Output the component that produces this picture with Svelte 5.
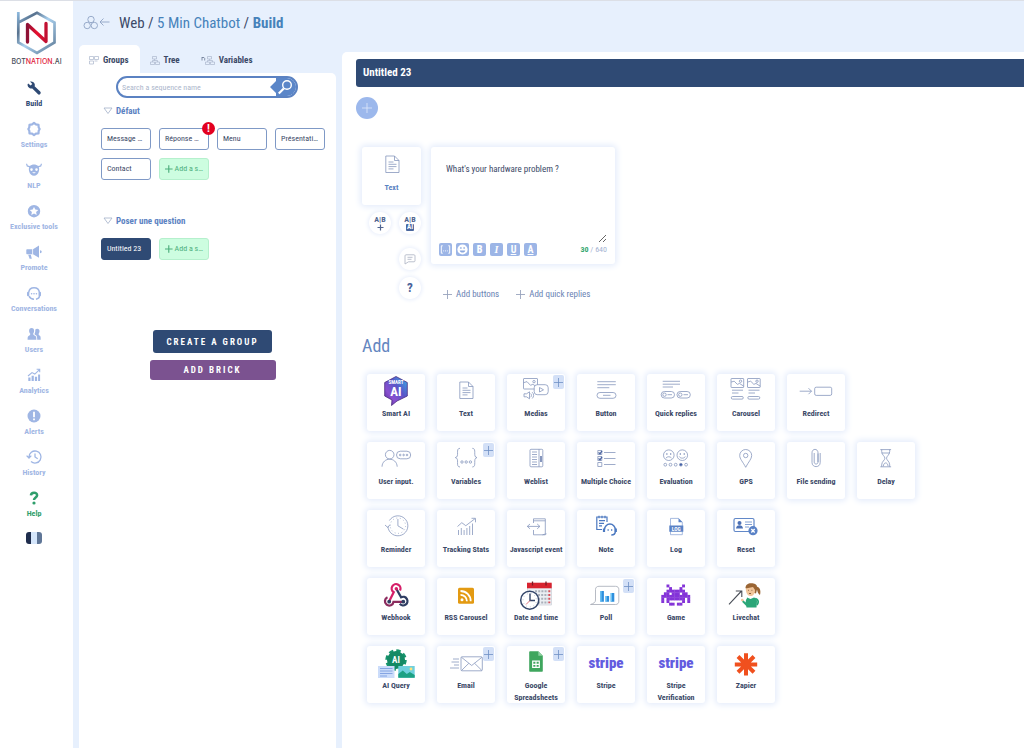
<script>
  const navItems = [
    { id: 'build', label: 'Build' },
    { id: 'settings', label: 'Settings' },
    { id: 'nlp', label: 'NLP' },
    { id: 'tools', label: 'Exclusive tools' },
    { id: 'promote', label: 'Promote' },
    { id: 'conversations', label: 'Conversations' },
    { id: 'users', label: 'Users' },
    { id: 'analytics', label: 'Analytics' },
    { id: 'alerts', label: 'Alerts' },
    { id: 'history', label: 'History' },
    { id: 'help', label: 'Help' }
  ];

  const tabs = ['Groups', 'Tree', 'Variables'];

  // names come already shortened to the chip width
  const groups = [
    {
      name: 'Défaut',
      sequences: [
        { name: 'Message …' },
        { name: 'Réponse …', alert: true },
        { name: 'Menu' },
        { name: 'Présentati…' },
        { name: 'Contact' }
      ]
    },
    { name: 'Poser une question', sequences: [{ name: 'Untitled 23' }] }
  ];

  const brickRows = [
    [
      { icon: 'smart', label: 'Smart AI' },
      { icon: 'text', label: 'Text' },
      { icon: 'medias', label: 'Medias', more: true },
      { icon: 'button', label: 'Button' },
      { icon: 'quick', label: 'Quick replies' },
      { icon: 'carousel', label: 'Carousel' },
      { icon: 'redirect', label: 'Redirect' }
    ],
    [
      { icon: 'input', label: 'User input.' },
      { icon: 'variables', label: 'Variables', more: true },
      { icon: 'weblist', label: 'Weblist' },
      { icon: 'choice', label: 'Multiple Choice' },
      { icon: 'evaluation', label: 'Evaluation' },
      { icon: 'gps', label: 'GPS' },
      { icon: 'file', label: 'File sending' },
      { icon: 'delay', label: 'Delay' }
    ],
    [
      { icon: 'reminder', label: 'Reminder' },
      { icon: 'tracking', label: 'Tracking Stats' },
      { icon: 'javascript', label: 'Javascript event' },
      { icon: 'note', label: 'Note' },
      { icon: 'log', label: 'Log' },
      { icon: 'reset', label: 'Reset' }
    ],
    [
      { icon: 'webhook', label: 'Webhook' },
      { icon: 'rss', label: 'RSS Carousel' },
      { icon: 'date', label: 'Date and time' },
      { icon: 'poll', label: 'Poll', more: true },
      { icon: 'game', label: 'Game' },
      { icon: 'livechat', label: 'Livechat' }
    ],
    [
      { icon: 'aiquery', label: 'AI Query' },
      { icon: 'email', label: 'Email', more: true },
      { icon: 'sheets', label: 'Google Spreadsheets', more: true },
      { icon: 'stripe', label: 'Stripe' },
      { icon: 'stripe', label: 'Stripe Verification' },
      { icon: 'zapier', label: 'Zapier' }
    ]
  ];

  const invader = [
    '..#.....#..',
    '...#...#...',
    '..#######..',
    '.##.###.##.',
    '###########',
    '#.#######.#',
    '#.#.....#.#',
    '...##.##...'
  ];

  let activeNav = $state('build');
  let activeTab = $state('Groups');
  let selected = $state('Untitled 23');
  let search = $state('');
  let message = $state("What's your hardware problem ?");
</script>

{#snippet navIcon(id)}
  <svg width="20" height="20" viewBox="0 0 20 20" fill="currentColor" aria-hidden="true">
    {#if id === 'build'}
      <path d="M4.2 5.4 6.6 7.600 8.300 6 6 3.600C8 3 10.500 4.200 10.800 6.500c.1.700 0 1.200-.2 1.700l5.600 5.400a1.700 1.700 0 0 1-2.400 2.500L8.300 10.400C6 11.200 3.300 9 3.600 6.200z" />
    {:else if id === 'settings'}
      <path fill="none" stroke="currentColor" stroke-width="2.200" stroke-linejoin="round" d="M10 3.900l1.900 1.500 2.600.5.200 2.600 1 1.500-1 1.700-.2 2.600-2.600.4-1.900 1.500-1.900-1.500-2.600-.4-.2-2.600-1-1.700 1-1.500.2-2.600 2.600-.5z" />
    {:else if id === 'nlp'}
      <path fill-rule="evenodd" d="M10 4.500c1.700 0 3 .5 4 1.500l2.200-.5.8-2 1 .4-.8 2.500-2.400.9c.5 1.200.5 2.800 0 4.200-.5 2.500-2.500 4.300-4.800 4.300s-4.300-1.800-4.800-4.300c-.5-1.400-.5-3 0-4.200l-2.400-.9L2 3.900l1-.4.8 2L6 6c1-1 2.300-1.500 4-1.500zM7.500 8.300a1.300 1.300 0 1 0 0 2.600 1.300 1.300 0 0 0 0-2.600zm5 0a1.300 1.300 0 1 0 0 2.600 1.300 1.300 0 0 0 0-2.600zM8 12.300l2 1.300 2-1.300z" />
    {:else if id === 'tools'}
      <path fill-rule="evenodd" d="M10 4a6.200 6.200 0 1 0 0 12.400A6.200 6.200 0 0 0 10 4zm0 1.900 1.300 2.700 3 .4-2.200 2 .6 3-2.700-1.500L7.300 14l.6-3-2.200-2 3-.4z" />
    {:else if id === 'promote'}
      <path d="M2.300 8.200c0-.6.4-1 1-1H9L15 3.500v12.300l-6-3.600H3.300c-.6 0-1-.4-1-1zM4.200 12.800h2.600l1 4H5.600zM16 8.200c2.300 0 2.300 3 0 3z" />
      <path stroke="#fff" stroke-width=".8" d="M8.600 7v5.400" />
    {:else if id === 'conversations'}
      <path fill="none" stroke="currentColor" stroke-width="1.500" d="M4.700 9.500a5.400 5.400 0 0 1 10.700 0M5 13.200c1 2 2.700 3 5 3M15.500 9v3.500c0 2-1.500 3.300-3.500 3.700" />
      <rect x="3" y="8.800" width="2.300" height="4.500" rx="1" />
      <rect x="14.700" y="8.800" width="2.300" height="4.500" rx="1" />
      <circle cx="7.600" cy="10.800" r=".8" /><circle cx="10" cy="10.800" r=".8" /><circle cx="12.400" cy="10.800" r=".8" />
    {:else if id === 'users'}
      <path d="M7.600 4c1.700 0 2.600 1.200 2.500 2.800 0 1.300-.5 2.300-1 3 .2 1.300 1 1.600 2.300 2.200.8.500 1 1.600 1 3.800H3.600c0-2.300 0-3.300 1-3.800 1.300-.6 1.700-.9 1.700-2.200-.7-.7-1.200-1.700-1.200-3C5 5.200 6 4 7.600 4z" />
      <path d="M11.200 5.800c.5-.7 1.200-1 2-1 1.600 0 2.400 1.100 2.300 2.500 0 1.200-.5 2-.9 2.600.1 1 .5 1.400 1.300 1.800.7.400.8 1.600.8 4.100h-3.500c0-2.800-.3-4-1.300-4.600-.9-.4-1.200-.7-1.400-1.200.6-1 1-2.800.7-4.200z" />
    {:else if id === 'analytics'}
      <path d="M4.300 12.500h2.200V16H4.300zM7.600 10.800h2.200V16H7.600zM10.900 11.800h2.200V16h-2.200zM14.100 9.500h2V16h-2z" />
      <path fill="none" stroke="currentColor" stroke-width="1.100" d="M4 11l4-3.400 2.800 1.500 4.500-4.300M12.600 4.200h3.100v3" />
    {:else if id === 'alerts'}
      <circle cx="10" cy="10" r="6.500" />
      <path fill="none" stroke="#fff" stroke-width="1.800" d="M10 5.800v5.400M10 12.400v1.800" />
    {:else if id === 'history'}
      <path fill="none" stroke="currentColor" stroke-width="1.300" d="M5 10a6 6 0 1 1 2 4.500M2.600 8.600 5 11l2.300-2.400M11 6.600V10l2.700 1.700" />
    {:else}
      <path fill="none" stroke="currentColor" stroke-width="2.500" d="M6.900 7.300c.3-3.600 6.400-3.500 6.200.1-.1 2-3.100 2.200-3.100 4.600" />
      <circle cx="10" cy="15" r="1.600" />
    {/if}
  </svg>
{/snippet}

{#snippet landscape(x, y, w, h)}
  <rect {x} {y} width={w} height={h} rx=".5" />
  <path d="M{x} {y + h * 0.4}l{w * 0.25} {h * -0.1} {w * 0.25} {h * 0.35} {w * 0.17} {h * -0.1} {w * 0.33} {h * 0.3}" />
  <circle cx={x + w * 0.75} cy={y + h * 0.3} r="1.200" />
{/snippet}

{#snippet brickIcon(id)}
  <svg class="brick-icon" width="48" height="32" viewBox="0 0 48 32" fill="none" stroke="currentColor" stroke-width=".8" aria-hidden="true">
    {#if id === 'smart'}
      <defs>
        <linearGradient id="smart-fill" x1="0" y1="1" x2="1" y2="0">
          <stop offset="0" stop-color="#4a2a8e" />
          <stop offset=".3" stop-color="#8a4fd0" />
          <stop offset=".6" stop-color="#5a55c8" />
          <stop offset="1" stop-color="#35b4e8" />
        </linearGradient>
      </defs>
      <path fill="url(#smart-fill)" stroke="#4b2a80" d="M24 .5 35.300 6.500v13.500L25 25l-5.500 4.500.5-5.500L12.700 20V6.500z" />
      <text x="24" y="8" class="glyph" font-size="5" text-anchor="middle">SMART</text>
      <text x="24" y="20" class="glyph" font-size="13" text-anchor="middle">AI</text>
    {:else if id === 'text'}
      <path d="M17.800 6h8.700l4.500 4.500V22.500H17.800zM26.500 6v4.500H31M20.500 12h5M20.500 14.300h8M20.500 16.600h8M20.500 18.900h5" />
    {:else if id === 'medias'}
      {@render landscape(11.5, 2.5, 14, 10.5)}
      <rect x="22.200" y="8.700" width="14" height="10" rx="3" fill="#fff" />
      <path d="M27.500 11.500v4.500l4-2.200zM12 17.800h2.500l3-2v7l-3-2H12zM18.700 17.500c1 1 1 2.700 0 3.700M20.200 16.200c1.900 1.700 1.900 4.600 0 6.300" />
    {:else if id === 'button'}
      <path d="M15.300 5.700h18.500M15.300 8.700h18.500M15.300 11.700h12M21 19.300h7.500" />
      <rect x="15" y="16.500" width="19" height="5.800" rx="2.900" />
    {:else if id === 'quick'}
      <path d="M10.700 5.300H28M10.700 8.200H28M10.700 11H21M15.500 18.700h4.500M31.500 18.700h4.500" />
      <rect x="9.200" y="15.500" width="13.300" height="6.500" rx="3.200" />
      <rect x="25" y="15.500" width="13.300" height="6.500" rx="3.200" />
      <circle cx="12.500" cy="18.700" r="1.700" /><circle cx="28.300" cy="18.700" r="1.700" />
    {:else if id === 'carousel'}
      {@render landscape(9, 2.5, 12.7, 9)}
      {@render landscape(25.5, 2.5, 12.7, 9)}
      <path d="M10 14.200h11M10 17h6.500M26.500 14.200h11M26.500 17H33" />
      <rect x="9.300" y="20.500" width="12" height="2.600" rx="1.300" />
      <rect x="25.800" y="20.500" width="12" height="2.600" rx="1.300" />
    {:else if id === 'redirect'}
      <path d="M7.700 15.200H19.500M16.500 12.200l3 3-3 3" />
      <rect x="22.700" y="11.200" width="17" height="8.200" rx="1.500" />
    {:else if id === 'input'}
      <circle cx="17.700" cy="10.700" r="4.300" />
      <path d="M10 22.700c.5-10 14.700-10 15.200 0" />
      <rect x="24.500" y="7.200" width="14.200" height="7.600" rx="3.800" />
      <circle cx="28.200" cy="11" r=".8" /><circle cx="31.600" cy="11" r=".8" /><circle cx="35" cy="11" r=".8" />
    {:else if id === 'variables'}
      <path d="M18 4.300c-5 0 0 8.700-4.700 9.300C18 14.300 13 23 18 23M30.300 4.300c5 0 0 8.700 4.700 9.300-4.700.700.300 9.400-4.700 9.400" />
      <circle cx="20" cy="18" r="1.200" /><circle cx="24.200" cy="18" r="1.200" /><circle cx="28.400" cy="18" r="1.200" />
    {:else if id === 'weblist'}
      <rect x="18" y="5.300" width="12.800" height="17.500" rx="1" />
      <path d="M27 5.300v17.500M20 8h5M20 10.500h5M20 13h5M20 15.500h5M20 18h5M20 20.500h5" />
      <path stroke-width="2" d="M29 12v6" />
    {:else if id === 'choice'}
      <path d="M15.800 6.500h4v4h-4zM15.800 12.500h4v4h-4zM15.800 18.500h4v4h-4zM22 8.500h11.500M22 14.500h11.500M22 20.500h11.500" />
      <path stroke="#4a639f" stroke-width="1.300" d="M16.500 8.500l1.500 1.300 2-3M16.500 14.500l1.500 1.300 2-3" />
    {:else if id === 'evaluation'}
      <circle cx="16.800" cy="11.200" r="5.300" /><circle cx="30.300" cy="11.200" r="5.300" />
      <path d="M14 14c1.500-1.700 4-1.700 5.500 0M27.300 12.500c1 2.200 5 2.200 6 0" />
      <path stroke-width="1.400" d="M14.200 10h1.300M18 10h1.300M27.700 10H29M31.600 10h1.300" />
      <circle cx="13.300" cy="20.700" r="1.400" /><circle cx="18.500" cy="20.700" r="1.400" /><circle cx="23.700" cy="20.700" r="1.400" />
      <circle cx="28.900" cy="20.700" r="1.400" fill="#3f5da8" /><circle cx="34.100" cy="20.700" r="1.400" />
    {:else if id === 'gps'}
      <path d="M23.700 23.300C21 18 17.700 15 17.700 11.500a6 6 0 0 1 12 0c0 3.500-3.300 6.500-6 11.800z" />
      <circle cx="23.700" cy="11.500" r="2.200" />
    {:else if id === 'file'}
      <path d="M26 9.500v8.500c0 2.700-3.800 2.700-3.800 0V9M28.200 9v9.500c0 5.500-8.200 5.500-8.200 0V8.800c0-4.600 6-4.600 6 0V18" />
    {:else if id === 'delay'}
      <path d="M18.300 5.600h10.800M18.300 22.800h10.800M19.700 5.600v2c0 3.300 3.200 4.600 3.200 6.600s-3.200 3.300-3.200 6.600v2M27.700 5.600v2c0 3.300-3.200 4.600-3.200 6.600s3.200 3.300 3.200 6.600v2M19.700 9h8M21.300 22.300c.3-4.500 4.500-4.500 4.800 0" />
    {:else if id === 'reminder'}
      <path d="M15.900 14.500a10 10 0 1 0 1.500-6M13 13l2.800 2.500L18 12.500M25.900 7v6.800l5.600 3.400" />
      <path stroke-dasharray=".8 2.700" d="M18.200 13.700a7.700 7.700 0 1 1 15.400 0 7.700 7.700 0 1 1-15.400 0" />
    {:else if id === 'tracking'}
      <path d="M15.500 14.500l4.300-3.800 4 3 9.200-7M29.500 6.300h4v4M16.500 18v5M19.300 16v7M22.100 18v5M24.900 16v7M27.700 14v9M30.500 11.500V23" />
    {:else if id === 'javascript'}
      <path d="M21.500 11V6.800h11.800v16H21.500V18M21.500 8.800h11.800M15.300 14.400h12.500M18 12l-2.700 2.400L18 16.800M25.200 12l2.700 2.400-2.700 2.400M30.500 22.800l4-1" />
    {:else if id === 'note'}
      <g stroke="#4b78c0">
        <path stroke-width="1.200" d="M25 10V5H14.800v12.500H20M17 3.700v2.500M20 3.700v2.500M23 3.700v2.500M17 8.700h6M17 11.300h5M17 13.900h3" />
        <path stroke-width="1.500" d="M22.500 17.500a5.400 5.400 0 0 1 10.800 0v2c0 2-1.700 3.500-4 3.500" />
        <path stroke-width="2.200" d="M22 16.500v3.500M33.800 16.500v3.500" />
        <path stroke-width="1.300" d="M25.500 18h1.300M29 18h1.300" />
      </g>
    {:else if id === 'log'}
      <path stroke="#91a9d8" d="M18.500 6.400h8l3.800 3.800v12.500H18.500z" />
      <path fill="#5a82c6" stroke="none" d="M26.500 6.200l4 4h-4zM17.300 13.500h14v6.200h-14z" />
      <text x="24.300" y="18.500" class="glyph" font-size="5.500" text-anchor="middle">LOG</text>
    {:else if id === 'reset'}
      <rect x="12" y="6.500" width="20" height="13" rx="1.500" stroke="#6288c8" stroke-width="1.200" />
      <circle cx="17.500" cy="11" r="2" fill="#4b70b5" stroke="none" />
      <path fill="#4b70b5" stroke="none" d="M14 16.500c0-4.500 7-4.500 7 0z" />
      <path stroke="#6288c8" d="M23 10h7M23 12.500h7M23 15h4" />
      <circle cx="31" cy="18.700" r="4.600" fill="#5a82c6" stroke="none" />
      <path stroke="#fff" stroke-width="1.400" d="M29.300 17l3.400 3.400M32.700 17l-3.400 3.400" />
    {:else if id === 'webhook'}
      <path stroke="#d61f69" stroke-width="2.300" d="M28 10.500a4.400 4.400 0 1 0-6.300 1.700l-4.500 9" />
      <path stroke="#2f3e63" stroke-width="2.300" d="M24.300 8.800l4.800 8.500a4.300 4.300 0 1 1-1.300 6.500" />
      <path stroke="#8b2c5e" stroke-width="2.300" d="M15.500 17.300a4.300 4.300 0 1 0 6 4.500h9.500" />
      <circle cx="24.300" cy="8.800" r="1.700" fill="#d61f69" stroke="none" />
      <circle cx="17.200" cy="21.700" r="1.900" fill="#2f3e63" stroke="none" />
      <circle cx="31.300" cy="21.700" r="1.900" fill="#2f3e63" stroke="none" />
    {:else if id === 'rss'}
      <rect x="16" y="7.700" width="16" height="16" rx="1.500" fill="#e39a12" stroke="none" />
      <circle cx="20" cy="19.700" r="1.500" fill="#fff" stroke="none" />
      <path stroke="#fff" stroke-width="1.800" d="M18.500 14.800a6.400 6.400 0 0 1 6.400 6.400M18.500 11a10.200 10.200 0 0 1 10.200 10.200" />
    {:else if id === 'date'}
      <path fill="#eceff3" stroke="#cfd3da" d="M15.500 4h24v21h-24z" />
      <path fill="#d8232f" stroke="none" d="M15 2.700h24.700v5.600H15z" />
      <path stroke="#7b1a22" stroke-width="1.300" d="M20.500 1.500v4M34 1.500v4" />
      <path stroke="#aab0ba" stroke-width="2" stroke-dasharray="2 1.200" d="M23 11.300h13M26 15h10M26 18.700h10M26 22.400h10" />
      <path stroke="#d8505a" stroke-width="2" stroke-dasharray="2 1.700" d="M37.300 10.300v13" />
      <circle cx="17.700" cy="20.200" r="9" fill="#fff" stroke="#34466a" stroke-width="1.500" />
      <path stroke="#34466a" stroke-width="1.400" d="M18 13.500v7h5" />
      <path stroke="#d8505a" d="M18 20.500l-4 4" />
      <path stroke="#9aa5b8" stroke-dasharray=".8 3" d="M11 20.200a6.700 6.700 0 1 1 13.400 0 6.700 6.700 0 1 1-13.400 0" />
    {:else if id === 'poll'}
      <path d="M17 6.300h16.500c2.200 0 3.300 1.200 3.300 3.200v11.700c0 2-1.100 3.300-3.300 3.300H8.500c3-1 5-2 5-4.500V9.500c0-2 1.300-3.200 3.500-3.200z" stroke="#a5a9b5" />
      <path fill="#2f8fdd" stroke="none" d="M18.300 11h3.600v10.700h-3.600zM23.500 16h3.600v5.700h-3.600zM28.700 13h3.600v8.700h-3.600z" />
      <path fill="#6cc5f5" stroke="none" d="M18.300 11h1.300v10.700h-1.300zM23.500 16h1.300v5.700h-1.300zM28.700 13H30v8.700h-1.300z" />
    {:else if id === 'game'}
      <g fill="#8434d8" stroke="none">
        {#each invader as line, y}
          {#each line as cell, x}
            {#if cell === '#'}
              <rect x={9.3 + x * 2.6} y={4.5 + y * 2.6} width="2.900" height="2.900" />
            {/if}
          {/each}
        {/each}
      </g>
    {:else if id === 'livechat'}
      <path stroke="#4a4f58" stroke-width="1.100" d="M7 24.300 19.500 11M13.800 11h6v6" />
      <path fill="#9a6534" stroke="none" d="M23.500 8c0-4 3.500-5.300 7-4.700 3 .3 4.500 2 4.500 3.500 3 .5 4 4 3 8.200-1.700-1-2.700-3.500-3-5.500l-1 4-8-3z" />
      <path fill="#f2c69b" stroke="none" d="M23.800 8.500 31 7l2 3c0 4-2 6-4.500 6-3 0-4.700-3-4.700-7.500z" />
      <path stroke="#6a4426" d="M26 10.300h.8M29.500 10.300h.8M27 13.500h2" />
      <path fill="#2ba678" stroke="none" d="M25 17.500l3.500 1.500 3.500-1.500c2.300.3 3 2 3 4l-.5 6H24.500L24 23z" />
      <path stroke="#2ba678" stroke-width="1.800" d="M25 19.500l-.8 5-3.500-3.500M33.500 18.500c3 1 3.500 4 1.500 6.500" />
      <circle cx="20.300" cy="20" r="1.300" fill="#f2c69b" stroke="none" />
    {:else if id === 'aiquery'}
      <circle cx="24" cy="12" r="9" stroke="#17956d" stroke-width="3.500" stroke-dasharray="4.200 2.870" />
      <circle cx="24" cy="12" r="9" fill="#148a65" stroke="none" />
      <path fill="#cbdcfa" stroke="none" d="M6 18h16.500v12H6z" />
      <path stroke="#7d9ee0" stroke-width=".9" d="M8 20.500h12.500M8 23h12.500M8 25.500h12.500M8 28h7" />
      <path fill="#6fd0dd" stroke="none" d="M26.300 18h16.400v11.700H26.300z" />
      <path fill="#1da183" stroke="none" d="M26.300 29.700V26l4.500-3.500 4 3.500 3-2 4.900 3v2.700z" />
      <circle cx="39" cy="21" r="1.400" fill="#ffe27a" stroke="none" />
      <text x="24" y="14.700" class="glyph" font-size="9" text-anchor="middle">AI</text>
    {:else if id === 'email'}
      <rect x="19" y="8.800" width="21.300" height="14" rx="1" />
      <path d="M19.500 9.300l10.200 8.200 10.200-8.200M19.500 22.500l7.300-7.200M39.900 22.500l-7.300-7.200M11 11h6M9.500 14h7.500M12 17h5M8 20h9" />
    {:else if id === 'sheets'}
      <path fill="#3fa65e" stroke="none" d="M18 3.200h8.300l4.500 4.500v15c0 .6-.4 1-1 1H18.200c-.6 0-1-.4-1-1V4c0-.5.300-.8.8-.8z" />
      <path fill="#8fd0a2" stroke="none" d="M26.300 3.200l4.500 4.500h-4.500z" />
      <path stroke="#fff" stroke-width="1.200" d="M20.700 13.200h6.600v6.200h-6.600zM20.700 16.300h6.600M24 13.200v6.200" />
    {:else if id === 'stripe'}
      <text x="24" y="20" class="stripe" font-size="15" text-anchor="middle">stripe</text>
    {:else}
      <path stroke="#f0501e" stroke-width="4" d="M24 5.200v8.300M24 19.500v8M12.800 16.400h8.400M26.800 16.400h8.400M16 8.500l5.800 5.700M26.200 18.600l5.800 5.700M32 8.500l-5.800 5.700M21.800 18.600 16 24.300" />
      <path stroke="#f0501e" stroke-width="1" fill="#f0501e" d="M21 13.500h6v6h-6z" />
    {/if}
  </svg>
{/snippet}

<div class="app">
  <nav class="sidebar" aria-label="Main">
    <a class="logo" href="#home">
      <svg width="42" height="46" viewBox="0 0 42 46" fill="none" aria-hidden="true">
        <defs>
          <linearGradient id="logo-frame" x1="0" y1="0" x2="1" y2="1">
            <stop offset="0" stop-color="#8db9de" />
            <stop offset=".25" stop-color="#58728e" />
            <stop offset=".5" stop-color="#a9d0ee" />
            <stop offset="1" stop-color="#5c7894" />
          </linearGradient>
          <linearGradient id="logo-n" x1="0" y1="0" x2="1" y2="0">
            <stop offset="0" stop-color="#8c1236" />
            <stop offset=".5" stop-color="#e8102f" />
            <stop offset="1" stop-color="#c01032" />
          </linearGradient>
        </defs>
        <path stroke="url(#logo-frame)" stroke-width="2.700" d="M2.300 2v30.500L21 43l17.500-10.500V12.500L21 2.700 2.300 12.500" />
        <path stroke="url(#logo-n)" stroke-width="3.300" stroke-linejoin="round" stroke-linecap="round" d="M11.500 32V14.500l18.500 17V13.500" />
      </svg>
      <span class="logo-name">BOT<em>NATION</em>.AI</span>
    </a>
    {#each navItems as item}
      <button
        class="nav-item"
        class:active={activeNav === item.id}
        class:help={item.id === 'help'}
        onclick={() => (activeNav = item.id)}
      >
        {@render navIcon(item.id)}
        <span>{item.label}</span>
      </button>
    {/each}
    <button class="language" aria-label="Language: French"></button>
  </nav>

  <div class="workspace">
    <section class="groups-column">
      <header class="breadcrumb">
        <a class="back" href="#bots" aria-label="Back to chatbots">
          <svg width="28" height="16" viewBox="0 0 28 16" fill="none" stroke="#8fa3c4" stroke-width=".9" aria-hidden="true">
            <circle cx="8" cy="4.500" r="3.200" /><circle cx="4.200" cy="10.500" r="3.200" /><circle cx="11.300" cy="10.500" r="3.200" />
            <path d="M17 7h9.500M20.500 3.500 17 7l3.500 3.500" />
          </svg>
        </a>
        <h1>Web / <a href="#bot">5 Min Chatbot</a> / <b>Build</b></h1>
      </header>

      <div class="tabs" role="tablist">
        {#each tabs as tab}
          <button class="tab" class:active={activeTab === tab} role="tab" aria-selected={activeTab === tab} onclick={() => (activeTab = tab)}>
            {#if tab === 'Groups'}
              <svg width="10" height="9" viewBox="0 0 10 9" aria-hidden="true"><path d="M.5.500h4v3h-4zM5.500.500h4v3h-4zM.5 5h4v3h-4zM5.500 5h3" /></svg>
            {:else if tab === 'Tree'}
              <svg width="10" height="9" viewBox="0 0 10 9" aria-hidden="true"><path d="M2.500.500h4v2.500h-4zM.5 6h4v2.500h-4zM5.500 6h4v2.500h-4zM4.500 3v1.500M2.500 6V4.500h5V6" /></svg>
            {:else}
              <svg width="14" height="9" viewBox="0 0 14 9" aria-hidden="true"><path class="strong" d="M1 4.500V1M1 1.500h2l.7.700v2.300" /><path d="M6.500.500h4v2.500h-4zM4.500 6h4v2.500h-4zM9.500 6h4v2.500h-4zM8.500 3v1.500M6.500 6V4.500h5V6" /></svg>
            {/if}
            {tab}
          </button>
        {/each}
      </div>

      <div class="groups-panel">
        <form class="search" onsubmit={(e) => e.preventDefault()}>
          <input type="text" placeholder="Search a sequence name" aria-label="Search a sequence name" bind:value={search} />
          <button class="search-button" aria-label="Search">
            <svg width="28" height="20" viewBox="0 0 28 20" aria-hidden="true">
              <path fill="#5b86c8" d="M2 10 8 4V0h20v20H8v-4z" />
              <circle cx="19" cy="8" r="4.300" fill="none" stroke="#fff" stroke-width="1.400" />
              <path stroke="#fff" stroke-width="2.200" d="M15.800 11.500l-5 5" />
            </svg>
          </button>
        </form>

        {#each groups as group}
          <section class="group">
            <h2>
              <svg width="10" height="8" viewBox="0 0 10 8" fill="none" stroke="#a3b1c9" stroke-width=".8" aria-hidden="true"><path d="M1 1h8L5 6.500z" /></svg>
              {group.name}
            </h2>
            <div class="sequences">
              {#each group.sequences as sequence}
                <button class="sequence" class:selected={selected === sequence.name} onclick={() => (selected = sequence.name)}>
                  {sequence.name}
                  {#if sequence.alert}<span class="alert-badge">!</span>{/if}
                </button>
              {/each}
              <button class="sequence add">
                <svg width="8" height="8" viewBox="0 0 8 8" stroke="currentColor" stroke-width="1.200" aria-hidden="true"><path d="M4 0v8M0 4h8" /></svg>
                Add a s…
              </button>
            </div>
          </section>
        {/each}

        <div class="group-actions">
          <button class="create-group">CREATE A GROUP</button>
          <button class="add-brick">ADD BRICK</button>
        </div>
      </div>
    </section>

    <main class="editor">
      <h2 class="sequence-title">Untitled 23</h2>
      <button class="insert" aria-label="Insert a brick">
        <svg width="12" height="12" viewBox="0 0 12 12" stroke="#dfe9fb" stroke-width=".8" aria-hidden="true"><path d="M6 1v10M1 6h10" /></svg>
      </button>

      <div class="brick">
        <div class="brick-side">
          <div class="brick-type">
            {@render brickIcon('text')}
            <span>Text</span>
          </div>
          <div class="brick-tools">
            <button class="round" aria-label="Add A/B variant">
              <span class="ab">A|B</span>
              <svg width="7" height="7" viewBox="0 0 7 7" stroke="#50648f" stroke-width="1.200" aria-hidden="true"><path d="M3.500.500v6M.5 3.500h6" /></svg>
            </button>
            <button class="round" aria-label="A/B variant with AI">
              <span class="ab">A|B</span>
              <span class="ab-ai">AI</span>
            </button>
          </div>
          <button class="round" aria-label="Comment">
            <svg width="12" height="11" viewBox="0 0 12 11" fill="none" stroke="#b4bac8" stroke-width=".9" aria-hidden="true"><path d="M2 .8h8c.6 0 1 .4 1 1v5c0 .6-.4 1-1 1H4.500L1 10V1.800c0-.6.4-1 1-1zM3.500 3.300h5M3.500 5.300h4" /></svg>
          </button>
          <button class="round question" aria-label="Help">?</button>
        </div>

        <div class="brick-body">
          <div class="message-card">
            <textarea rows="4" aria-label="Message text" bind:value={message}></textarea>
            <div class="format-bar">
              <button class="format" aria-label="Insert variable">
                <svg width="13" height="13" viewBox="0 0 14 14" fill="none" stroke="#fff" aria-hidden="true"><path d="M4 3H2.500v8H4M10 3h1.500v8H10M4.500 8.500h1M6.500 8.500h1M8.500 8.500h1" /></svg>
              </button>
              <button class="format" aria-label="Emoji">
                <svg width="13" height="13" viewBox="0 0 14 14" aria-hidden="true"><circle cx="7" cy="7" r="5.500" fill="#fff" /><path fill="#8ba8de" d="M4.500 4.500h1.500v1.800H4.500zM8 4.500h1.500v1.800H8zM4 8h6c-.5 3-5.500 3-6 0z" /></svg>
              </button>
              <button class="format"><b>B</b></button>
              <button class="format serif"><i>I</i></button>
              <button class="format"><u>U</u></button>
              <button class="format"><u>A</u></button>
              <span class="counter"><b>{message.length}</b> / 640</span>
            </div>
          </div>
          <div class="brick-links">
            {#each ['Add buttons', 'Add quick replies'] as label}
              <button class="link">
                <svg width="9" height="9" viewBox="0 0 9 9" stroke="#98a4bd" stroke-width=".9" aria-hidden="true"><path d="M4.500 0v9M0 4.500h9" /></svg>
                {label}
              </button>
            {/each}
          </div>
        </div>
      </div>

      <h2 class="add-title">Add</h2>
      <div class="palette">
        {#each brickRows as row}
          <div class="palette-row">
            {#each row as item}
              <button class="tile">
                {@render brickIcon(item.icon)}
                <span>{item.label}</span>
                {#if item.more}
                  <span class="more">
                    <svg width="9" height="9" viewBox="0 0 9 9" stroke="#6f8fc4" stroke-width=".8" aria-hidden="true"><path d="M4.500 0v9M0 4.500h9" /></svg>
                  </span>
                {/if}
              </button>
            {/each}
          </div>
        {/each}
      </div>
    </main>
  </div>
</div>

<style>
  :global(body) {
    margin: 0;
    background: #e7f0fd;
  }

  .app {
    --navy: #2f4a74;
    --blue: #5b82c2;
    --soft: #9fb6e4;
    --ink: #3b4967;
    display: flex;
    min-height: 100vh;
    box-sizing: border-box;
    border-top: 1px solid #dcdfe6;
    font-family: 'Roboto Condensed', 'Liberation Sans Narrow', Roboto, sans-serif;
    font-size: 9px;
    line-height: 12px;
    color: var(--ink);
  }

  button,
  input,
  textarea {
    font: inherit;
    color: inherit;
    margin: 0;
    padding: 0;
    border: none;
    background: none;
  }

  button {
    cursor: pointer;
  }

  a {
    color: inherit;
    text-decoration: none;
  }

  h1,
  h2 {
    margin: 0;
    font-weight: 400;
  }

  .sidebar {
    display: flex;
    flex-direction: column;
    align-items: center;
    flex: none;
    width: 73px;
    padding-right: 5px;
    box-sizing: border-box;
    background: #fff;
  }

  .logo {
    display: flex;
    flex-direction: column;
    align-items: center;
    margin: 9px 0 10px 5px;
  }

  .logo-name {
    font-family: Inter, sans-serif;
    font-size: 7px;
    font-weight: 500;
    color: #454b58;
  }

  .logo-name em {
    font-style: normal;
    color: #e0213c;
  }

  .nav-item {
    display: flex;
    flex-direction: column;
    align-items: center;
    margin-bottom: 9px;
    font-size: 8px;
    font-weight: 700;
    color: var(--soft);
  }

  .nav-item.active {
    color: var(--navy);
  }

  .nav-item.help {
    color: #2f9e6b;
  }

  .language {
    width: 16px;
    height: 12px;
    margin-top: 3px;
    border-radius: 3px;
    background: linear-gradient(90deg, #1f2d4d 33%, #d5e6fb 33% 66%, #5f7697 66%);
  }

  .workspace {
    display: flex;
    flex: 1;
    min-width: 0;
    gap: 6px;
    padding-left: 6px;
  }

  .groups-column {
    display: flex;
    flex-direction: column;
    flex: none;
    width: 257px;
  }

  .breadcrumb {
    display: flex;
    align-items: center;
    gap: 8px;
    height: 44px;
    padding-left: 4px;
    box-sizing: border-box;
  }

  .back {
    display: flex;
  }

  h1 {
    font-size: 15px;
    line-height: 20px;
    white-space: nowrap;
  }

  h1 a,
  h1 b {
    color: #4682ba;
  }

  .tabs {
    display: flex;
  }

  .tab {
    display: flex;
    align-items: center;
    gap: 4px;
    height: 28px;
    padding: 2px 11px 0 10px;
    box-sizing: border-box;
    border-radius: 5px 5px 0 0;
    font-weight: 700;
  }

  .tab.active {
    background: #fff;
  }

  .tab svg {
    fill: none;
    stroke: #aab6cc;
    stroke-width: 0.7;
  }

  .tab .strong {
    stroke: #5a6885;
  }

  .groups-panel {
    flex: 1;
    padding: 3px 10px 0 22px;
    border-radius: 0 5px 0 0;
    background: #fff;
  }

  .search {
    display: flex;
    align-items: center;
    width: 182px;
    height: 22px;
    margin-left: 15px;
    box-sizing: border-box;
    overflow: hidden;
    border: 2px solid var(--blue);
    border-radius: 11px;
  }

  .search input {
    flex: 1;
    min-width: 0;
    padding: 2px 0 0 4px;
    font-size: 8px;
    outline: none;
  }

  .search input::placeholder {
    color: #adb7cc;
    opacity: 1;
  }

  .search-button {
    display: flex;
  }

  .group {
    margin-bottom: 28px;
  }

  .group h2 {
    display: flex;
    align-items: center;
    gap: 3px;
    padding: 7px 0 11px 2px;
    font-size: 9px;
    font-weight: 700;
    color: var(--blue);
  }

  .sequences {
    display: flex;
    flex-wrap: wrap;
    gap: 8px;
  }

  .sequence {
    position: relative;
    display: flex;
    align-items: center;
    gap: 2px;
    width: 50px;
    height: 22px;
    padding: 0 5px;
    box-sizing: border-box;
    border: 1px solid #7f99c6;
    border-radius: 3px;
    font-size: 8px;
    white-space: nowrap;
  }

  .sequence.selected {
    border-color: var(--navy);
    background: var(--navy);
    color: #fff;
  }

  .sequence.add {
    border-color: #b5f0cd;
    background: #cdfde0;
    color: #4cae7c;
  }

  .alert-badge {
    position: absolute;
    top: -7px;
    right: -7px;
    width: 13px;
    height: 13px;
    border-radius: 50%;
    background: #e3001f;
    color: #fff;
    font-size: 11px;
    font-weight: 700;
    line-height: 13px;
    text-align: center;
  }

  .group-actions {
    display: flex;
    flex-direction: column;
    align-items: center;
    gap: 7px;
    padding: 42px 2px 0 0;
  }

  .group-actions button {
    border-radius: 3px;
    color: #fff;
    font-weight: 700;
    letter-spacing: 2px;
  }

  .create-group {
    width: 119px;
    height: 23px;
    background: var(--navy);
  }

  .add-brick {
    width: 126px;
    height: 20px;
    background: #7b5290;
  }

  .editor {
    flex: 1;
    min-width: 0;
    margin-top: 51px;
    padding: 7px 0 24px 14px;
    border-radius: 5px 0 0 0;
    background: #fff;
  }

  .sequence-title {
    padding: 0 7px;
    border-radius: 3px 0 0 3px;
    background: var(--navy);
    color: #fff;
    font-size: 11px;
    font-weight: 700;
    line-height: 28px;
  }

  .insert {
    display: flex;
    align-items: center;
    justify-content: center;
    width: 22px;
    height: 22px;
    margin-top: 10px;
    border-radius: 50%;
    background: #9cb8ec;
  }

  .brick {
    display: flex;
    gap: 10px;
    margin: 28px 0 0 6px;
  }

  .brick-side {
    display: flex;
    flex-direction: column;
    align-items: flex-end;
    width: 59px;
    gap: 7px;
  }

  .brick-type,
  .message-card,
  .tile {
    border-radius: 3px;
    background: #fff;
    box-shadow: 0 0 6px 2px #e4ecfb;
  }

  .brick-type {
    display: flex;
    flex-direction: column;
    align-items: center;
    align-self: stretch;
    height: 58px;
    padding-top: 3px;
    box-sizing: border-box;
    color: var(--blue);
    font-size: 8px;
    font-weight: 700;
  }

  .brick-tools {
    display: flex;
    gap: 8px;
  }

  .round {
    display: flex;
    flex-direction: column;
    align-items: center;
    justify-content: center;
    width: 22px;
    height: 22px;
    border-radius: 50%;
    background: #fff;
    box-shadow: 0 0 4px 1px #e8eefb;
  }

  .brick-tools .round {
    margin-bottom: 7px;
  }

  .ab {
    font-size: 8px;
    font-weight: 700;
    line-height: 8px;
    color: #50648f;
  }

  .ab-ai {
    padding: 0 1px;
    border-radius: 1px;
    background: #4b689f;
    color: #fff;
    font-size: 7px;
    font-weight: 700;
    line-height: 7px;
  }

  .question {
    color: #4a639a;
    font-size: 13px;
    font-weight: 700;
  }

  .brick-body {
    width: 184px;
  }

  .message-card {
    display: flex;
    flex-direction: column;
    height: 117px;
    padding: 16px 8px 8px 8px;
    box-sizing: border-box;
  }

  .message-card textarea {
    flex: 1;
    padding-left: 7px;
    outline: none;
    resize: vertical;
  }

  .format-bar {
    display: flex;
    align-items: center;
    gap: 4px;
  }

  .format {
    display: flex;
    align-items: center;
    justify-content: center;
    width: 13px;
    height: 13px;
    border-radius: 2px;
    background: #9cb5e6;
    color: #fff;
    font-size: 10px;
    font-weight: 700;
  }

  .format.serif {
    font-family: 'Liberation Serif', serif;
  }

  .counter {
    margin-left: auto;
    font-size: 8px;
    color: #a3b2d2;
  }

  .counter b {
    color: #35a76f;
  }

  .brick-links {
    display: flex;
    gap: 17px;
    padding: 24px 0 0 12px;
  }

  .link {
    display: flex;
    align-items: center;
    gap: 4px;
    color: #6a83b4;
    white-space: nowrap;
  }

  .add-title {
    margin: 34px 0 0 6px;
    color: #6486c0;
    font-size: 18px;
    line-height: 24px;
  }

  .palette {
    display: flex;
    flex-direction: column;
    gap: 11px;
    margin: 16px 0 0 11px;
  }

  .palette-row {
    display: flex;
    flex-wrap: wrap;
    gap: 12px;
  }

  .tile {
    position: relative;
    display: flex;
    flex-direction: column;
    align-items: center;
    width: 58px;
    height: 57px;
    padding-top: 2px;
    box-sizing: border-box;
    font-size: 8px;
    font-weight: 700;
  }

  .brick-icon {
    flex: none;
    color: #8797bd;
  }

  .glyph {
    fill: #fff;
    stroke: none;
    font-weight: 700;
  }

  .stripe {
    fill: #635bdf;
    stroke: none;
    font-weight: 900;
  }

  .more {
    position: absolute;
    top: 1px;
    right: 1px;
    display: flex;
    align-items: center;
    justify-content: center;
    width: 11px;
    height: 14px;
    border-radius: 2px;
    background: #d3e0f7;
  }
</style>
